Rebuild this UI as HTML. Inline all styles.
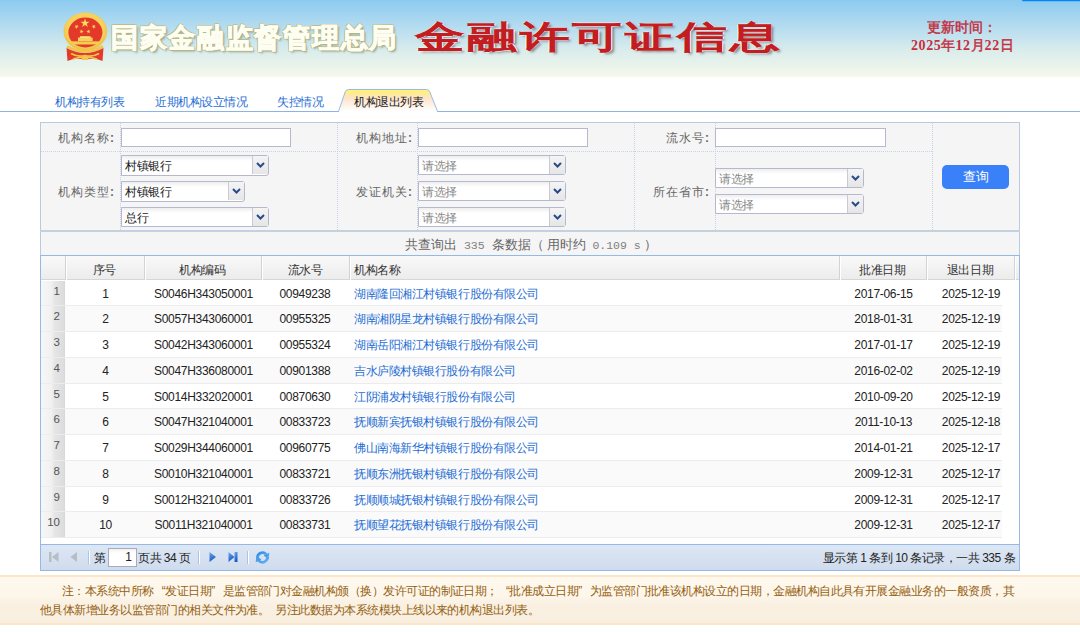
<!DOCTYPE html>
<html><head><meta charset="utf-8">
<style>
*{box-sizing:border-box}
html,body{margin:0;padding:0;width:1080px;height:633px;overflow:hidden;background:#fff;font-family:"Liberation Sans",sans-serif;font-size:11.5px;color:#333}
.abs{position:absolute}
#hdr{left:0;top:0;width:1080px;height:77px;background:linear-gradient(to bottom,#8ccbf0 0%,#b5dcf0 35%,#d9ecec 65%,#f6f8ea 100%)}
#bluebar{left:1022px;top:0;width:58px;height:1px;background:#0584fa;box-shadow:0 0.5px 0.5px rgba(5,132,250,.5);border-bottom-left-radius:1px}
#t1{left:111px;top:20px;font-size:27px;font-weight:900;color:#fdfdf2;-webkit-text-stroke:1px #fdfdf2;letter-spacing:1.7px;white-space:nowrap;
 text-shadow:-1px 0 #bbbb84,1px 0 #bbbb84,0 -1px #bbbb84,0 1px #bbbb84,1px 1px #aead78,-1px -1px #bbbb84,1px -1px #bbbb84,-1px 1px #bbbb84,2px 2px 2px rgba(90,100,70,.45)}
#t2{left:415px;top:16px;font-size:32px;font-weight:normal;-webkit-text-stroke:1.3px #c21d22;color:#c41e22;white-space:nowrap;font-family:"Liberation Sans",sans-serif;transform-origin:0 0;transform:scaleX(1.55);letter-spacing:1.85px;
 text-shadow:-1px 0 #fff,1px 0 #fff,0 -1px #fff,0 1px #fff,2px 2px 2px rgba(60,60,60,.55)}
#upd{left:901px;top:19px;width:125px;text-align:left;color:#c43040;font-weight:normal;-webkit-text-stroke:0.45px #c43040;font-size:14px;line-height:18px;font-family:"Liberation Serif",serif}
#upd b{font-weight:bold;-webkit-text-stroke:0;letter-spacing:0.6px}
#tabline{left:0;top:111px;width:1080px;height:1px;background:#8fb2e0}
.tab{top:94px;color:#1f6ed4;font-size:12px;letter-spacing:-0.5px;white-space:nowrap}
#form{left:40px;top:122px;width:980px;height:134px;background:#f5f5f5;border:1px solid #b9cbe0;border-bottom:none}
.lbl{color:#666;font-size:12px;letter-spacing:1px;white-space:nowrap;text-align:right}
.lbl b{font-weight:bold;letter-spacing:0;margin-left:0px;font-size:12px;color:#666}
.vd{width:0;border-left:1px dotted #c5d3e6}
.hd{height:0;border-top:1px dotted #c5d3e6}
.inp{background:#fff;border:1px solid #b5b8cf;height:19px}
.sel{background:linear-gradient(to bottom,#eeeeee 0,#fff 5px);border:1px solid #b5b8cf;height:20px;border-radius:0 3px 3px 0}
.sel .v{position:absolute;left:3px;top:2px;color:#222;font-size:12px;letter-spacing:-0.5px}
.sel .ph{color:#888}
.sel .arr{position:absolute;right:0;top:0;width:16px;height:18px;background:linear-gradient(to bottom,#f4f4f4,#e6e6e6);border-left:1px solid #c8cad6}
.sel .arr svg{position:absolute;left:3px;top:6px}
#btn{left:942px;top:165px;width:67px;height:24px;background:#3a80f8;border-radius:5px;color:#fff;font-size:13px;text-align:center;line-height:24px}
#fsep{left:40px;top:230px;width:980px;height:2px;background:#c4d2e0}
#cnt{left:405px;top:236px;color:#666;font-size:13px;white-space:nowrap}
.mono{font-family:"Liberation Mono",monospace;font-size:11.5px;color:#808080}
#grid{left:40px;top:255px;width:980px;height:316px;border:1px solid #95b8e7;background:#fff}
#ghead{left:41px;top:256px;width:978px;height:24px;background:linear-gradient(to bottom,#f9f9f9 0,#ececec 100%);border-bottom:1px solid #d6d6d6}
.gvl{top:256px;width:1px;height:24px;background:#d3d3d3;box-shadow:1px 0 0 #fff}
.hc{top:262px;color:#333;font-size:12px;letter-spacing:-0.45px;white-space:nowrap}
.row{left:41px;width:961px;background:#fff;border-bottom:1px solid #ececec}
.row.alt{background:#fafafa}
.row .rn{position:absolute;left:0;top:0;width:24px;background:linear-gradient(to right,#f6f6f6 0,#f1f1f1 45%,#e6e6e6 58%,#dcdcdc 100%);border-right:1px solid #d8d8d8;color:#555;text-align:right;padding-right:4px;padding-top:4px;font-size:11.5px}
.row .c{position:absolute;top:6px;white-space:nowrap;color:#222;font-size:12px;letter-spacing:-0.3px}
.row .lk{color:#1f6ed4;font-size:12px;letter-spacing:-0.45px;top:5px}
#pager{left:41px;top:544px;width:978px;height:26px;background:linear-gradient(to bottom,#dde7f4,#cfdcee);border-top:1px solid #95b8e7}
.psep{top:551px;width:2px;height:13px;border-left:1px solid #a8c4e8;border-right:1px solid #fff}
.ptxt{top:550px;color:#222;font-size:12px;letter-spacing:-0.5px;white-space:nowrap}
.pinp{left:108px;top:548px;width:29px;height:19px;background:#fff;border:1px solid #a8acb8;text-align:right;padding-right:4px;font-size:12px;line-height:17px;color:#222;background:linear-gradient(to bottom,#f0f0f0 0,#fff 4px)}
#note{left:0;top:575px;width:1080px;height:50px;background:linear-gradient(to bottom,#fef8ee 0,#fdf6ea 40%,#f9f0e2 60%,#f8efe1 100%);border-top:2px solid #fde6c6;border-bottom:2px solid #fde6c6}
.ntxt{color:#94600f;font-size:12px;letter-spacing:-0.53px;white-space:nowrap}
.q1,.q2{display:inline-block;width:11.47px}.q1{text-align:right}.q2{text-align:left}
</style></head><body>
<div id="hdr" class="abs"></div>
<div id="bluebar" class="abs"></div>
<svg class="abs" style="left:58px;top:8px" width="54" height="56" viewBox="0 0 54 56">
 <defs><radialGradient id="gold" cx="0.5" cy="0.45" r="0.6"><stop offset="0.7" stop-color="#f7d25a"/><stop offset="1" stop-color="#e8b43a"/></radialGradient></defs>
 <ellipse cx="27.3" cy="23.5" rx="21.8" ry="19" fill="url(#gold)"/>
 <ellipse cx="27.4" cy="24.5" rx="17" ry="15" fill="#e3382a"/>
 <polygon points="27.00,10.40 28.12,13.66 31.57,13.72 28.81,15.79 29.82,19.08 27.00,17.10 24.18,19.08 25.19,15.79 22.43,13.72 25.88,13.66" fill="#f8dc5a"/>
 <polygon points="19.75,16.61 19.42,18.23 20.85,19.08 19.20,19.27 18.84,20.89 18.15,19.38 16.50,19.54 17.72,18.41 17.06,16.89 18.51,17.70" fill="#f8dc5a"/>
 <polygon points="34.65,16.61 35.89,17.70 37.34,16.89 36.68,18.41 37.90,19.54 36.25,19.38 35.56,20.89 35.20,19.27 33.55,19.08 34.98,18.23" fill="#f8dc5a"/>
 <polygon points="24.10,21.28 24.20,22.93 25.80,23.38 24.25,23.99 24.32,25.65 23.27,24.37 21.71,24.95 22.60,23.55 21.57,22.25 23.18,22.66" fill="#f8dc5a"/>
 <polygon points="29.90,21.28 30.82,22.66 32.43,22.25 31.40,23.55 32.29,24.95 30.73,24.37 29.68,25.65 29.75,23.99 28.20,23.38 29.80,22.93" fill="#f8dc5a"/>
 <rect x="20" y="29.5" width="14.6" height="3.5" fill="#f6d25a"/>
 <rect x="22" y="28.2" width="10.6" height="1.8" fill="#f9e27a"/>
 <rect x="13.5" y="33.3" width="27.4" height="3.2" fill="#f3cc52"/>
 <path d="M9,38.5 Q27,48 45,38.5" stroke="#f0c54a" stroke-width="3" fill="none"/>
 <path d="M8.5,40 Q27,50 45.5,40 L44.5,53 Q36,49 27,52 Q18,49 9.5,53 Z" fill="#e33a2a"/>
 <path d="M13,45.5 Q20,49.5 27,47.5 Q34,49.5 41,45.5" stroke="#f3c84a" stroke-width="1.8" fill="none"/>
 <path d="M15,51 Q27,47 39,51" stroke="#f3c84a" stroke-width="1.4" fill="none"/>
 <ellipse cx="27" cy="50" rx="3.5" ry="2" fill="#f3c84a"/>
</svg>
<div id="t1" class="abs">国家金融监督管理总局</div>
<div id="t2" class="abs">金融许可证信息</div>
<div id="upd" class="abs"><div style="padding-left:26px;white-space:nowrap">更新时间：</div><div style="padding-left:10px;white-space:nowrap"><b>2025</b>年<b>12</b>月<b>22</b>日</div></div>

<div id="tabline" class="abs"></div>
<div class="abs tab" style="left:55px">机构持有列表</div>
<div class="abs tab" style="left:155px">近期机构设立情况</div>
<div class="abs tab" style="left:277px">失控情况</div>
<svg class="abs" style="left:337px;top:88px" width="102" height="25" viewBox="0 0 102 25">
 <defs><linearGradient id="tg" x1="0" y1="0" x2="0" y2="1"><stop offset="0" stop-color="#fff27a"/><stop offset="0.14" stop-color="#ffee88"/><stop offset="0.4" stop-color="#fde4cc"/><stop offset="1" stop-color="#ffffff"/></linearGradient></defs>
 <path d="M1.5,23.5 L8.3,3.6 Q9.2,1.5 11.5,1.5 L89.5,1.5 Q91.8,1.5 92.7,3.6 L100.5,23.5" fill="url(#tg)" stroke="#99bbe6" stroke-width="1"/>
 <rect x="2" y="23" width="98" height="2" fill="#fff"/>
</svg>
<div class="abs tab" style="left:354px;color:#222">机构退出列表</div>


<div id="form" class="abs"></div>
<div class="abs vd" style="left:120px;top:123px;height:107px"></div>
<div class="abs vd" style="left:337px;top:123px;height:107px"></div>
<div class="abs vd" style="left:417px;top:123px;height:107px"></div>
<div class="abs vd" style="left:634px;top:123px;height:107px"></div>
<div class="abs vd" style="left:715px;top:123px;height:107px"></div>
<div class="abs vd" style="left:932px;top:123px;height:107px"></div>
<div class="abs hd" style="left:41px;top:151px;width:891px"></div>
<div class="abs lbl" style="left:-6px;width:120px;top:130px">机构名称<b>:</b></div>
<div class="abs lbl" style="left:-6px;width:120px;top:184px">机构类型<b>:</b></div>
<div class="abs lbl" style="left:292px;width:120px;top:130px">机构地址<b>:</b></div>
<div class="abs lbl" style="left:292px;width:120px;top:184px">发证机关<b>:</b></div>
<div class="abs lbl" style="left:589px;width:120px;top:130px">流水号<b>:</b></div>
<div class="abs lbl" style="left:589px;width:120px;top:184px">所在省市<b>:</b></div>
<div class="abs inp" style="left:121px;top:128px;width:170px;height:19px"></div>
<div class="abs inp" style="left:418px;top:128px;width:170px;height:19px"></div>
<div class="abs inp" style="left:715px;top:128px;width:171px;height:19px"></div>
<div class="abs sel" style="left:121px;top:155px;width:148px;height:21px"><span class="v">村镇银行</span><div class="arr"><svg width="9" height="6" viewBox="0 0 9 6"><path d="M1,1 L4.5,4.5 L8,1" stroke="#2a4a8a" stroke-width="2" fill="none"/></svg></div></div>
<div class="abs sel" style="left:121px;top:181px;width:124px;height:21px"><span class="v">村镇银行</span><div class="arr"><svg width="9" height="6" viewBox="0 0 9 6"><path d="M1,1 L4.5,4.5 L8,1" stroke="#2a4a8a" stroke-width="2" fill="none"/></svg></div></div>
<div class="abs sel" style="left:121px;top:207px;width:148px;height:20px"><span class="v">总行</span><div class="arr"><svg width="9" height="6" viewBox="0 0 9 6"><path d="M1,1 L4.5,4.5 L8,1" stroke="#2a4a8a" stroke-width="2" fill="none"/></svg></div></div>
<div class="abs sel" style="left:418px;top:155px;width:148px;height:20px"><span class="v ph">请选择</span><div class="arr"><svg width="9" height="6" viewBox="0 0 9 6"><path d="M1,1 L4.5,4.5 L8,1" stroke="#2a4a8a" stroke-width="2" fill="none"/></svg></div></div>
<div class="abs sel" style="left:418px;top:181px;width:148px;height:20px"><span class="v ph">请选择</span><div class="arr"><svg width="9" height="6" viewBox="0 0 9 6"><path d="M1,1 L4.5,4.5 L8,1" stroke="#2a4a8a" stroke-width="2" fill="none"/></svg></div></div>
<div class="abs sel" style="left:418px;top:207px;width:148px;height:20px"><span class="v ph">请选择</span><div class="arr"><svg width="9" height="6" viewBox="0 0 9 6"><path d="M1,1 L4.5,4.5 L8,1" stroke="#2a4a8a" stroke-width="2" fill="none"/></svg></div></div>
<div class="abs sel" style="left:715px;top:168px;width:149px;height:20px"><span class="v ph">请选择</span><div class="arr"><svg width="9" height="6" viewBox="0 0 9 6"><path d="M1,1 L4.5,4.5 L8,1" stroke="#2a4a8a" stroke-width="2" fill="none"/></svg></div></div>
<div class="abs sel" style="left:715px;top:194px;width:149px;height:20px"><span class="v ph">请选择</span><div class="arr"><svg width="9" height="6" viewBox="0 0 9 6"><path d="M1,1 L4.5,4.5 L8,1" stroke="#2a4a8a" stroke-width="2" fill="none"/></svg></div></div>
<div id="btn" class="abs">查询</div>
<div id="fsep" class="abs"></div>
<div id="cnt" class="abs">共查询出<span class="mono"> 335 </span>条数据<span style="margin-right:3px">（</span>用时约<span class="mono"> 0.109 s</span><span style="margin-left:3px">）</span></div>
<div id="grid" class="abs"></div>
<div id="ghead" class="abs"></div>
<div class="abs gvl" style="left:65px"></div>
<div class="abs gvl" style="left:144px"></div>
<div class="abs gvl" style="left:261px"></div>
<div class="abs gvl" style="left:349px"></div>
<div class="abs gvl" style="left:839px"></div>
<div class="abs gvl" style="left:926px"></div>
<div class="abs gvl" style="left:1014px"></div>
<div class="abs hc" style="left:65px;width:79px;text-align:center">序号</div>
<div class="abs hc" style="left:144px;width:117px;text-align:center">机构编码</div>
<div class="abs hc" style="left:261px;width:88px;text-align:center">流水号</div>
<div class="abs hc" style="left:354px">机构名称</div>
<div class="abs hc" style="left:839px;width:87px;text-align:center">批准日期</div>
<div class="abs hc" style="left:926px;width:88px;text-align:center">退出日期</div>
<div class="abs row" style="top:281px;height:25px">
<div class="rn" style="height:24px">1</div>
<div class="c" style="left:25px;width:79px;text-align:center">1</div>
<div class="c" style="left:104px;width:117px;text-align:center">S0046H343050001</div>
<div class="c" style="left:220px;width:88px;text-align:center">00949238</div>
<div class="c lk" style="left:313px">湖南隆回湘江村镇银行股份有限公司</div>
<div class="c" style="left:799px;width:87px;text-align:center">2017-06-15</div>
<div class="c" style="left:886px;width:88px;text-align:center">2025-12-19</div>
</div>
<div class="abs row alt" style="top:306px;height:26px">
<div class="rn" style="height:25px">2</div>
<div class="c" style="left:25px;width:79px;text-align:center">2</div>
<div class="c" style="left:104px;width:117px;text-align:center">S0057H343060001</div>
<div class="c" style="left:220px;width:88px;text-align:center">00955325</div>
<div class="c lk" style="left:313px">湖南湘阴星龙村镇银行股份有限公司</div>
<div class="c" style="left:799px;width:87px;text-align:center">2018-01-31</div>
<div class="c" style="left:886px;width:88px;text-align:center">2025-12-19</div>
</div>
<div class="abs row" style="top:332px;height:26px">
<div class="rn" style="height:25px">3</div>
<div class="c" style="left:25px;width:79px;text-align:center">3</div>
<div class="c" style="left:104px;width:117px;text-align:center">S0042H343060001</div>
<div class="c" style="left:220px;width:88px;text-align:center">00955324</div>
<div class="c lk" style="left:313px">湖南岳阳湘江村镇银行股份有限公司</div>
<div class="c" style="left:799px;width:87px;text-align:center">2017-01-17</div>
<div class="c" style="left:886px;width:88px;text-align:center">2025-12-19</div>
</div>
<div class="abs row alt" style="top:358px;height:26px">
<div class="rn" style="height:25px">4</div>
<div class="c" style="left:25px;width:79px;text-align:center">4</div>
<div class="c" style="left:104px;width:117px;text-align:center">S0047H336080001</div>
<div class="c" style="left:220px;width:88px;text-align:center">00901388</div>
<div class="c lk" style="left:313px">吉水庐陵村镇银行股份有限公司</div>
<div class="c" style="left:799px;width:87px;text-align:center">2016-02-02</div>
<div class="c" style="left:886px;width:88px;text-align:center">2025-12-19</div>
</div>
<div class="abs row" style="top:384px;height:25px">
<div class="rn" style="height:24px">5</div>
<div class="c" style="left:25px;width:79px;text-align:center">5</div>
<div class="c" style="left:104px;width:117px;text-align:center">S0014H332020001</div>
<div class="c" style="left:220px;width:88px;text-align:center">00870630</div>
<div class="c lk" style="left:313px">江阴浦发村镇银行股份有限公司</div>
<div class="c" style="left:799px;width:87px;text-align:center">2010-09-20</div>
<div class="c" style="left:886px;width:88px;text-align:center">2025-12-19</div>
</div>
<div class="abs row alt" style="top:409px;height:26px">
<div class="rn" style="height:25px">6</div>
<div class="c" style="left:25px;width:79px;text-align:center">6</div>
<div class="c" style="left:104px;width:117px;text-align:center">S0047H321040001</div>
<div class="c" style="left:220px;width:88px;text-align:center">00833723</div>
<div class="c lk" style="left:313px">抚顺新宾抚银村镇银行股份有限公司</div>
<div class="c" style="left:799px;width:87px;text-align:center">2011-10-13</div>
<div class="c" style="left:886px;width:88px;text-align:center">2025-12-18</div>
</div>
<div class="abs row" style="top:435px;height:26px">
<div class="rn" style="height:25px">7</div>
<div class="c" style="left:25px;width:79px;text-align:center">7</div>
<div class="c" style="left:104px;width:117px;text-align:center">S0029H344060001</div>
<div class="c" style="left:220px;width:88px;text-align:center">00960775</div>
<div class="c lk" style="left:313px">佛山南海新华村镇银行股份有限公司</div>
<div class="c" style="left:799px;width:87px;text-align:center">2014-01-21</div>
<div class="c" style="left:886px;width:88px;text-align:center">2025-12-17</div>
</div>
<div class="abs row alt" style="top:461px;height:26px">
<div class="rn" style="height:25px">8</div>
<div class="c" style="left:25px;width:79px;text-align:center">8</div>
<div class="c" style="left:104px;width:117px;text-align:center">S0010H321040001</div>
<div class="c" style="left:220px;width:88px;text-align:center">00833721</div>
<div class="c lk" style="left:313px">抚顺东洲抚银村镇银行股份有限公司</div>
<div class="c" style="left:799px;width:87px;text-align:center">2009-12-31</div>
<div class="c" style="left:886px;width:88px;text-align:center">2025-12-17</div>
</div>
<div class="abs row" style="top:487px;height:25px">
<div class="rn" style="height:24px">9</div>
<div class="c" style="left:25px;width:79px;text-align:center">9</div>
<div class="c" style="left:104px;width:117px;text-align:center">S0012H321040001</div>
<div class="c" style="left:220px;width:88px;text-align:center">00833726</div>
<div class="c lk" style="left:313px">抚顺顺城抚银村镇银行股份有限公司</div>
<div class="c" style="left:799px;width:87px;text-align:center">2009-12-31</div>
<div class="c" style="left:886px;width:88px;text-align:center">2025-12-17</div>
</div>
<div class="abs row alt" style="top:512px;height:26px">
<div class="rn" style="height:25px">10</div>
<div class="c" style="left:25px;width:79px;text-align:center">10</div>
<div class="c" style="left:104px;width:117px;text-align:center">S0011H321040001</div>
<div class="c" style="left:220px;width:88px;text-align:center">00833731</div>
<div class="c lk" style="left:313px">抚顺望花抚银村镇银行股份有限公司</div>
<div class="c" style="left:799px;width:87px;text-align:center">2009-12-31</div>
<div class="c" style="left:886px;width:88px;text-align:center">2025-12-17</div>
</div>
<div id="pager" class="abs"></div>
<svg class="abs" style="left:48px;top:551px" width="12" height="12" viewBox="0 0 12 12"><rect x="1" y="1" width="2.5" height="10" fill="#b8bcc4"/><path d="M10.5,1 L4,6 L10.5,11 Z" fill="#b8bcc4"/></svg>
<svg class="abs" style="left:69px;top:551px" width="10" height="12" viewBox="0 0 10 12"><path d="M8,1 L1.5,6 L8,11 Z" fill="#b8bcc4"/></svg>
<div class="abs psep" style="left:88px"></div>
<div class="abs ptxt" style="left:94px">第</div>
<div class="abs pinp">1</div>
<div class="abs ptxt" style="left:138px">页共 34 页</div>
<div class="abs psep" style="left:198px"></div>
<svg class="abs" style="left:208px;top:551px" width="10" height="12" viewBox="0 0 10 12"><defs><linearGradient id="bg1" x1="0" y1="0" x2="0.3" y2="1"><stop offset="0" stop-color="#6aaaf2"/><stop offset="1" stop-color="#1c58c0"/></linearGradient></defs><path d="M1.5,1 L8,6 L1.5,11 Z" fill="url(#bg1)"/></svg>
<svg class="abs" style="left:227px;top:551px" width="12" height="12" viewBox="0 0 12 12"><path d="M1.5,1 L7.5,6 L1.5,11 Z" fill="url(#bg1)"/><rect x="7.5" y="1" width="3" height="10" fill="url(#bg1)"/></svg>
<div class="abs psep" style="left:247px"></div>
<svg class="abs" style="left:255px;top:550px" width="15" height="15" viewBox="0 0 15 15"><defs><linearGradient id="rg" x1="0" y1="0" x2="1" y2="1"><stop offset="0" stop-color="#2a86e6"/><stop offset="1" stop-color="#6cb8f4"/></linearGradient></defs><path d="M2.3,8 C2.5,3.2 8,0.8 11.3,4.3" stroke="url(#rg)" stroke-width="2.6" fill="none"/><path d="M8.6,5.6 L14.3,2.8 L13.6,9.2 Z" fill="url(#rg)"/><path d="M12.7,7 C12.5,11.8 7,14.2 3.7,10.7" stroke="url(#rg)" stroke-width="2.6" fill="none"/><path d="M6.4,9.4 L0.7,12.2 L1.4,5.8 Z" fill="#4a9cec"/></svg>
<div class="abs ptxt" style="left:715px;width:300px;text-align:right">显示第 1 条到 10 条记录，一共 335 条</div>
<div id="note" class="abs"></div>
<div class="abs ntxt" style="left:62px;top:583px">注：本系统中所称<span class="q1">“</span>发证日期<span class="q2">”</span>是监管部门对金融机构颁（换）发许可证的制证日期；<span class="q1">“</span>批准成立日期<span class="q2">”</span>为监管部门批准该机构设立的日期，金融机构自此具有开展金融业务的一般资质，其</div>
<div class="abs ntxt" style="left:40px;top:602px">他具体新增业务以监管部门的相关文件为准。<span style="display:inline-block;width:6px"></span>另注此数据为本系统模块上线以来的机构退出列表。</div>
</body></html>
